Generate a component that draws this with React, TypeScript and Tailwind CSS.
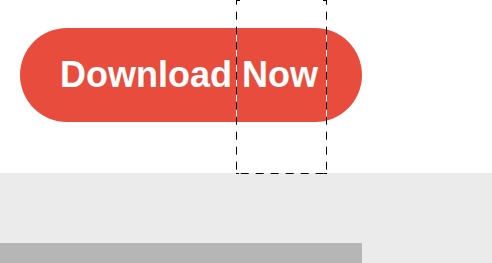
import React from "react";

export default function App() {
  return (
    <div className="relative w-[492px] h-[263px] overflow-hidden bg-white" style={{ fontFamily: '"Liberation Sans", Arial, sans-serif' }}>
      <div className="h-[173px] pt-[28px] pl-[20px]">
        <button className="h-[94px] pl-[40px] pr-[44px] rounded-full bg-[#e74c3c] text-white font-bold text-[36px] leading-none tracking-[0px]">
          Download Now
        </button>
      </div>
      <div className="h-[90px] bg-[#ebebeb] flex flex-col justify-end">
        <div className="h-[20px] w-[362px] bg-[#b6b6b6]" />
      </div>
      <svg className="absolute left-0 top-0 pointer-events-none" width="492" height="263">
        <line x1="236.5" y1="0" x2="236.5" y2="174" stroke="#ffffff" strokeWidth="1" />
        <line x1="326.5" y1="0" x2="326.5" y2="174" stroke="#ffffff" strokeWidth="1" />
        <line x1="236.5" y1="0" x2="236.5" y2="174" stroke="#000" strokeWidth="1" strokeDasharray="8 7" strokeDashoffset="3.3" />
        <line x1="326.5" y1="0" x2="326.5" y2="174" stroke="#000" strokeWidth="1" strokeDasharray="8 7" strokeDashoffset="3.3" />
        <line x1="236" y1="173.5" x2="327" y2="173.5" stroke="#000" strokeWidth="1" strokeDasharray="8 7" strokeDashoffset="10.3" />
        <line x1="236" y1="0.5" x2="240" y2="0.5" stroke="#000" strokeWidth="1" />
        <line x1="323" y1="0.5" x2="327" y2="0.5" stroke="#000" strokeWidth="1" />
        <line x1="236" y1="173.5" x2="239" y2="173.5" stroke="#000" strokeWidth="1" />
        <line x1="324" y1="173.5" x2="327" y2="173.5" stroke="#000" strokeWidth="1" />
      </svg>
    </div>
  );
}
